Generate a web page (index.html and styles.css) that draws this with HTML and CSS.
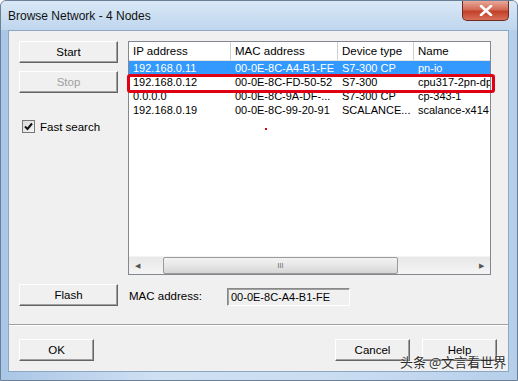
FILE: index.html
```html
<!DOCTYPE html>
<html lang="en">
<head>
    <meta charset="UTF-8">
    <title>Browse Network - 4 Nodes</title>
    <link rel="stylesheet" href="styles.css">
</head>
<body>
    <div class="window">
        <div class="titlebar">
            <span class="title">Browse Network - 4 Nodes</span>
            <div class="close">
                <svg width="14" height="11" viewBox="0 0 14 11">
                    <path d="M2 1 L12 10 M12 1 L2 10" stroke="#fff" stroke-width="2.6" stroke-linecap="round"/>
                </svg>
            </div>
        </div>

        <div class="client">
            <div class="main">
                <div class="side">
                    <button class="btn wide">Start</button>
                    <button class="btn wide" disabled>Stop</button>
                    <label class="check">
                        <span class="box">
                            <svg width="9" height="9" viewBox="0 0 9 9">
                                <path d="M1 4.5 L3.5 7 L8 1.5" stroke="#111" stroke-width="2" fill="none"/>
                            </svg>
                        </span>
                        Fast search
                    </label>
                </div>

                <div class="list">
                    <div class="list-body">
                        <div class="row head">
                            <div class="cell">IP address</div>
                            <div class="cell">MAC address</div>
                            <div class="cell">Device type</div>
                            <div class="cell">Name</div>
                        </div>
                        <div class="row selected">
                            <div class="cell">192.168.0.11</div>
                            <div class="cell">00-0E-8C-A4-B1-FE</div>
                            <div class="cell">S7-300 CP</div>
                            <div class="cell">pn-io</div>
                        </div>
                        <div class="row">
                            <div class="cell">192.168.0.12</div>
                            <div class="cell">00-0E-8C-FD-50-52</div>
                            <div class="cell">S7-300</div>
                            <div class="cell">cpu317-2pn-dp</div>
                        </div>
                        <div class="row">
                            <div class="cell">0.0.0.0</div>
                            <div class="cell">00-0E-8C-9A-DF-...</div>
                            <div class="cell">S7-300 CP</div>
                            <div class="cell">cp-343-1</div>
                        </div>
                        <div class="row">
                            <div class="cell">192.168.0.19</div>
                            <div class="cell">00-0E-8C-99-20-91</div>
                            <div class="cell">SCALANCE...</div>
                            <div class="cell">scalance-x414</div>
                        </div>
                    </div>
                    <div class="hscroll">
                        <div class="arrow">&#9664;</div>
                        <div class="track">
                            <div class="thumb">III</div>
                        </div>
                        <div class="arrow">&#9654;</div>
                    </div>
                </div>
            </div>

            <div class="flash-row">
                <button class="btn wide">Flash</button>
                <span class="mac-label">MAC address:</span>
                <div class="mac-field">00-0E-8C-A4-B1-FE</div>
            </div>

            <div class="separator"></div>

            <div class="footer">
                <button class="btn small">OK</button>
                <div class="footer-right">
                    <button class="btn small">Cancel</button>
                    <button class="btn small">Help</button>
                </div>
            </div>
        </div>

        <div class="highlight"></div>
        <div class="dot"></div>
        <div class="watermark">头条 @文言看世界</div>
    </div>
</body>
</html>
```

FILE: styles.css
```css
/* Page */
body {
    margin: 0;
    padding: 0;
    background-color: #fff;
    font-family: "Liberation Sans", Arial, sans-serif;
    font-size: 11px;
    color: #000;
}

/* Window frame */
.window {
    position: relative;
    width: 518px;
    height: 381px;
    box-sizing: border-box;
    padding: 0 8px 9px 7px;
    background: linear-gradient(90deg, #a9c6e6 0%, #cfe0f2 30%, #c8dcf1 70%, #b5cfea 100%);
    border: 1px solid #6b7f96;
    border-radius: 6px 6px 0 0;
    overflow: hidden;
}

.titlebar {
    display: flex;
    align-items: flex-start;
    justify-content: space-between;
    height: 29px;
    margin: 0 -8px 0 -7px;
    padding-left: 7px;
    background: linear-gradient(180deg, #d9e8f6 0%, #c9ddf1 60%, #bfd6ee 100%);
}

.title {
    margin-top: 8px;
    font-size: 12px;
    color: #111;
}

.close {
    display: flex;
    align-items: center;
    justify-content: center;
    width: 45px;
    height: 19px;
    margin: 0 8px 0 0;
    border: 1px solid #6f2a22;
    border-top: none;
    border-radius: 0 0 5px 5px;
    background: linear-gradient(180deg, #e9a899 0%, #d36a55 45%, #c2412b 55%, #d86f57 100%);
}

/* Client area */
.client {
    height: 342px;
    background-color: #f0f0f0;
    border: 1px solid #8ea6c2;
    box-sizing: border-box;
}

.main {
    display: flex;
    gap: 10px;
    padding: 10px 0 0 10px;
}

.side {
    display: flex;
    flex-direction: column;
    width: 99px;
}

/* Buttons */
.btn {
    height: 22px;
    padding: 0;
    font-family: "Liberation Sans", Arial, sans-serif;
    font-size: 11.5px;
    color: #000;
    background-color: #f0f0f0;
    border: 1px solid;
    border-color: #fff #646464 #646464 #fff;
    box-shadow: inset -1px -1px #a0a0a0;
}

.btn:disabled {
    color: #a0a0a0;
}

.wide {
    width: 99px;
}

.small {
    width: 75px;
}

.side .btn + .btn {
    margin-top: 8px;
}

.check {
    display: flex;
    align-items: center;
    gap: 5px;
    margin: 27px 0 0 3px;
    font-size: 11.5px;
}

.box {
    display: flex;
    align-items: center;
    justify-content: center;
    width: 11px;
    height: 11px;
    border: 1px solid #777;
    background: linear-gradient(135deg, #d8d8d8, #f6f6f6);
}

/* List view */
.list {
    display: flex;
    flex-direction: column;
    width: 363px;
    height: 234px;
    box-sizing: border-box;
    border: 1px solid #828790;
    background-color: #fff;
    overflow: hidden;
}

.list-body {
    flex: 1;
}

.row {
    display: grid;
    grid-template-columns: 102px 107px 76px 90px;
    height: 14px;
    line-height: 14px;
    white-space: nowrap;
}

.cell {
    padding-left: 4px;
    overflow: hidden;
    font-size: 11px;
}

.head {
    height: 18px;
    line-height: 18px;
    border-bottom: 1px solid #e3e3e3;
}

.head .cell {
    border-right: 1px solid #cfcfcf;
    font-size: 11.5px;
}

.selected {
    background-color: #3399ff;
    color: #fff;
}

.hscroll {
    display: flex;
    height: 17px;
    background: linear-gradient(180deg, #e8e8e8, #f4f4f4);
    border-top: 1px solid #f4f4f4;
}

.arrow {
    width: 17px;
    font-size: 7px;
    line-height: 17px;
    text-align: center;
    color: #555;
}

.track {
    flex: 1;
    padding-left: 17px;
}

.thumb {
    width: 233px;
    height: 15px;
    line-height: 15px;
    text-align: center;
    font-size: 7px;
    color: #666;
    border: 1px solid #9a9a9a;
    border-radius: 2px;
    background: linear-gradient(180deg, #f3f3f3 0%, #e6e6e6 50%, #d6d6d6 100%);
}

/* Flash row */
.flash-row {
    display: flex;
    align-items: flex-start;
    padding: 9px 0 0 10px;
}

.mac-label {
    width: 98px;
    margin: 6px 0 0 11px;
    font-size: 11.5px;
}

.mac-field {
    width: 118px;
    height: 16px;
    margin-top: 4px;
    padding-left: 3px;
    line-height: 16px;
    font-size: 11px;
    border: 1px solid;
    border-color: #888 #fff #fff #888;
    box-shadow: inset 1px 1px #a0a0a0;
}

.separator {
    margin-top: 18px;
    border-top: 1px solid #a0a0a0;
    border-bottom: 1px solid #fff;
}

/* Footer */
.footer {
    display: flex;
    justify-content: space-between;
    padding: 13px 11px 0 10px;
}

.footer-right {
    display: flex;
    gap: 12px;
}

/* Overlays */
.highlight {
    position: absolute;
    left: 126px;
    top: 73px;
    width: 362px;
    height: 13px;
    border: 3px solid #e00016;
    border-radius: 3px;
}

.dot {
    position: absolute;
    left: 264px;
    top: 127px;
    width: 2px;
    height: 2px;
    background-color: #e00016;
}

.watermark {
    position: absolute;
    left: 399px;
    top: 351px;
    font-family: "Noto Sans CJK SC", sans-serif;
    font-size: 13px;
    color: #2b2b2b;
    text-shadow: 0 0 2px #fff;
}
```
